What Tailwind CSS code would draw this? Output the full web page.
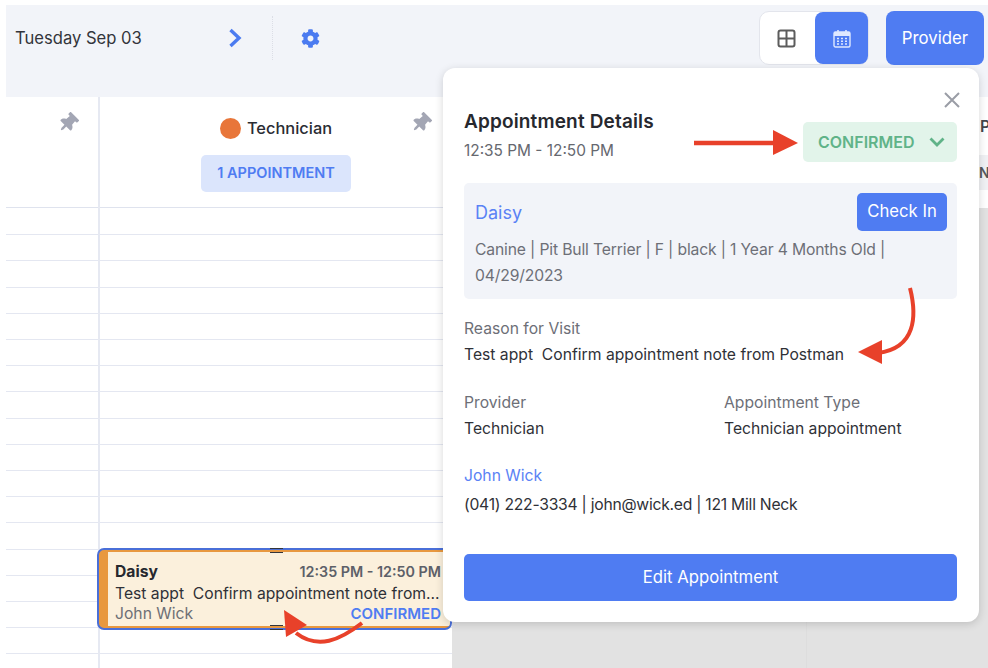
<!DOCTYPE html>
<html lang="en">
<head>
    <meta charset="UTF-8">
    <title>Appointment Details</title>
    <script src="https://cdn.jsdelivr.net/npm/@tailwindcss/browser@4"></script>
</head>
<body class="bg-white font-['Inter',sans-serif] text-[#26282e]">
<div class="relative w-[988px] h-[668px] overflow-hidden pl-[6px] pt-[5px] flex flex-col">

    <!-- Toolbar -->
    <header class="h-[92px] shrink-0 bg-[#f2f4f9] pl-[9px] pr-[4px] pt-[6px] flex items-start">
        <div class="h-[54px] w-[213px] pt-[1px] flex items-center text-[16.6px] text-[#33353b]">Tuesday Sep 03</div>
        <div class="h-[54px] flex items-center">
            <svg class="w-[14px] h-[20px]" viewBox="0 0 14 20" fill="none" stroke="#4b7bf0" stroke-width="3.4"><path d="M2.5 2l8.5 8-8.5 8"/></svg>
        </div>
        <div class="ml-[30px] mt-[5px] h-[44px] border-l border-dotted border-[#dcdee6]"></div>
        <div class="ml-[28px] h-[54px] flex items-center">
            <svg class="w-[19px] h-[19px]" viewBox="0 0 512 512" fill="#4b7bf0"><path d="M487.4 315.7l-42.6-24.6c4.3-23.2 4.3-47 0-70.2l42.6-24.6c4.9-2.8 7.1-8.6 5.5-14-11.1-35.6-30-67.8-54.7-94.6-3.8-4.1-10-5.1-14.8-2.3L380.8 110c-17.9-15.4-38.5-27.3-60.8-35.1V25.8c0-5.6-3.9-10.5-9.4-11.7-36.7-8.2-74.3-7.8-109.2 0-5.5 1.2-9.4 6.1-9.4 11.7V75c-22.2 7.9-42.8 19.8-60.8 35.1L88.7 85.5c-4.9-2.8-11-1.9-14.8 2.3-24.7 26.7-43.6 58.9-54.7 94.6-1.7 5.4.6 11.2 5.5 14L67.3 221c-4.3 23.2-4.3 47 0 70.2l-42.6 24.6c-4.9 2.8-7.1 8.6-5.5 14 11.1 35.6 30 67.8 54.7 94.6 3.8 4.1 10 5.1 14.8 2.3l42.6-24.6c17.9 15.4 38.5 27.3 60.8 35.1v49.2c0 5.6 3.9 10.5 9.4 11.7 36.7 8.2 74.3 7.8 109.2 0 5.5-1.2 9.4-6.1 9.4-11.7v-49.2c22.2-7.9 42.8-19.8 60.8-35.1l42.6 24.6c4.9 2.8 11 1.9 14.8-2.3 24.7-26.7 43.6-58.9 54.7-94.6 1.5-5.5-.7-11.3-5.6-14.1zM256 336c-44.1 0-80-35.9-80-80s35.9-80 80-80 80 35.9 80 80-35.9 80-80 80z"/></svg>
        </div>
        <div class="ml-auto w-[110px] h-[54px] flex bg-white rounded-[10px] border border-[#e3e5ec]">
            <div class="w-[55px] pr-[2px] flex items-center justify-center">
                <svg class="w-[19px] h-[19px]" viewBox="0 0 19 19" fill="none" stroke="#5c5c5c" stroke-width="2"><rect x="1.5" y="1.5" width="16" height="16" rx="2"/><path d="M9.5 1.5v16M1.5 9.5h16"/></svg>
            </div>
            <div class="flex-1 bg-[#4f7cf2] rounded-[8px] flex items-center justify-center">
                <svg class="w-[18px] h-[19px]" viewBox="0 0 18 19" fill="none"><rect x="1" y="3" width="16" height="15" rx="1.5" stroke="#dfe8ff" stroke-width="1.4"/><path d="M1 3h16v4H1z" fill="#dfe8ff"/><path d="M5 1v3M13 1v3" stroke="#dfe8ff" stroke-width="1.6"/><path d="M4 9.5h2M8 9.5h2M12 9.5h2M4 12.3h2M8 12.3h2M12 12.3h2M4 15h2M8 15h2M12 15h2" stroke="#dfe8ff" stroke-width="1.4"/></svg>
            </div>
        </div>
        <button class="ml-[17px] w-[98px] h-[54px] pt-[1px] bg-[#4f7cf2] rounded-[8px] text-white text-[16.8px]">Provider</button>
    </header>

    <div class="flex-1 flex min-h-0">
        <!-- Calendar columns -->
        <section class="w-[446px] shrink-0 flex relative">
            <div class="w-[94px] shrink-0 border-r-2 border-[#e6e9f2] flex flex-col">
                <div class="h-[111px] shrink-0 border-b border-[#dfe3ee] flex justify-end pr-[20px] pt-[16px]">
                    <svg class="w-[20px] h-[20px] rotate-45" viewBox="0 0 384 512" fill="#a3a6b4"><path d="M298 214L286 96h42c13 0 24-11 24-24V24c0-13-11-24-24-24H56C43 0 32 11 32 24v48c0 13 11 24 24 24h42L86 214C37 237 0 277 0 328c0 13 11 24 24 24h136v104c0 1 .3 2.5 .8 3.6l24 48c3 5.9 11.4 5.9 14.3 0l24-48c.6-1.1 .8-2.3 .8-3.6V352h136c13 0 24-11 24-24 0-51-38-91-86-114z"/></svg>
                </div>
                <div class="flex-1 mt-[0.5px] bg-[repeating-linear-gradient(to_bottom,transparent_0,transparent_25.2px,#e4e7f1_25.2px,#e4e7f1_26.2px)]"></div>
            </div>
            <div class="flex-1 flex flex-col relative">
                <div class="h-[111px] shrink-0 border-b border-[#dfe3ee] relative flex flex-col items-center pt-[19px]">
                    <div class="flex items-center gap-[6px]">
                        <span class="w-[21px] h-[21px] rounded-full bg-[#e8763a]"></span>
                        <span class="text-[16.4px] font-medium text-[#2a2c33]">Technician</span>
                    </div>
                    <div class="mt-[14px] w-[150px] h-[37px] rounded-[5px] bg-[#dbe5fc] text-[#4f7cf2] text-[14.5px] font-semibold flex items-center justify-center">1 APPOINTMENT</div>
                    <svg class="absolute top-[16px] left-[311px] w-[20px] h-[20px] rotate-45" viewBox="0 0 384 512" fill="#a3a6b4"><path d="M298 214L286 96h42c13 0 24-11 24-24V24c0-13-11-24-24-24H56C43 0 32 11 32 24v48c0 13 11 24 24 24h42L86 214C37 237 0 277 0 328c0 13 11 24 24 24h136v104c0 1 .3 2.5 .8 3.6l24 48c3 5.9 11.4 5.9 14.3 0l24-48c.6-1.1 .8-2.3 .8-3.6V352h136c13 0 24-11 24-24 0-51-38-91-86-114z"/></svg>
                </div>
                <div class="flex-1 mt-[0.5px] bg-[repeating-linear-gradient(to_bottom,transparent_0,transparent_25.2px,#e4e7f1_25.2px,#e4e7f1_26.2px)]"></div>

                <!-- Event on the grid -->
                <div class="absolute left-[-3px] top-[451px] w-[355px] h-[82px] rounded-[7px] border-2 border-[#4a6fd8] bg-[#e8983f] pl-[9px] py-[2px] overflow-hidden">
                    <div class="h-full bg-[#fbf0dc] pl-[7px] pr-[9px] flex flex-col leading-[20px] text-[15.7px]">
                        <div class="flex justify-between mt-[10px]">
                            <span class="font-bold text-[#26282e]">Daisy</span>
                            <span class="font-semibold text-[#5d6068] text-[14.3px]">12:35 PM - 12:50 PM</span>
                        </div>
                        <div class="mt-[2px] text-[#2f3137] whitespace-pre">Test appt  Confirm appointment note from...</div>
                        <div class="flex justify-between">
                            <span class="text-[#6d6f75]">John Wick</span>
                            <span class="font-semibold text-[#4f7cf2] text-[15px]">CONFIRMED</span>
                        </div>
                    </div>
                </div>
                <div class="absolute left-[170px] top-[451px] w-[13px] h-[5px] border-y border-[#33353b]"></div>
                <div class="absolute left-[170px] top-[528px] w-[13px] h-[5px] border-y border-[#33353b]"></div>
            </div>
        </section>

        <!-- Dimmed neighbour column -->
        <section class="flex-1 flex flex-col">
            <div class="h-[111px] shrink-0 bg-white flex flex-col pl-[528px] overflow-hidden">
                <div class="h-[58px] pt-[21px] text-[16px] font-semibold text-[#44464c] leading-none">P</div>
            </div>
            <div class="flex-1 bg-[#e2e2e2] flex">
                <div class="w-[355px] border-r border-[#dddddd]"></div>
            </div>
        </section>
    </div>

    <div class="absolute left-[452px] top-[155px] w-[536px] h-[35px] bg-[#f0f1f4] pl-[527px] text-[14px] font-semibold text-[#55575c] leading-[35px] overflow-hidden">N</div>

    <!-- Appointment details dialog -->
    <aside class="absolute left-[443px] top-[68px] w-[536px] h-[554px] bg-white rounded-[12px] shadow-[0_2px_8px_rgba(0,0,0,0.16)] pl-[21px] pr-[22px] pt-[41px]">
        <svg class="absolute top-[23px] right-[18px] w-[18px] h-[18px]" viewBox="0 0 18 18" stroke="#9a9da6" stroke-width="2"><path d="M2 2l14 14M16 2L2 16"/></svg>
        <div class="flex justify-between items-start">
            <div>
                <h2 class="text-[19px] font-semibold leading-[26px] tracking-[0.15px] text-[#26282e]">Appointment Details</h2>
                <p class="mt-[5px] text-[15.4px] leading-[22px] text-[#66686f]">12:35 PM - 12:50 PM</p>
            </div>
            <div class="mt-[13px] w-[154px] h-[40px] rounded-[5px] bg-[#e2f4ea] flex items-center pl-[15px] pr-[12px] justify-between">
                <span class="text-[16px] font-semibold text-[#60b388]">CONFIRMED</span>
                <svg class="w-[16px] h-[10px]" viewBox="0 0 16 10" fill="none" stroke="#60b388" stroke-width="2.8"><path d="M1.5 1.5L8 8l6.5-6.5"/></svg>
            </div>
        </div>

        <div class="mt-[21px] h-[116px] bg-[#f2f4f9] rounded-[5px] pl-[11px] pr-[10px] pt-[10px]">
            <div class="flex justify-between items-center">
                <span class="text-[18px] text-[#5a82f5]">Daisy</span>
                <button class="w-[90px] h-[38px] bg-[#4f7cf2] rounded-[5px] text-white text-[16.7px]">Check In</button>
            </div>
            <p class="mt-[6px] text-[15.7px] leading-[26px] text-[#6d6f77] tracking-[-0.15px]">Canine | Pit Bull Terrier | F | black | 1 Year 4 Months Old |<br>04/29/2023</p>
        </div>

        <div class="mt-[17px] text-[15.7px] leading-[26px]">
            <p class="text-[#6d6f77]">Reason for Visit</p>
            <p class="text-[#2f3137] whitespace-pre">Test appt  Confirm appointment note from Postman</p>
        </div>

        <div class="mt-[22px] grid grid-cols-[260px_1fr] text-[15.7px] leading-[26px]">
            <div>
                <p class="text-[#6d6f77]">Provider</p>
                <p class="text-[#2f3137]">Technician</p>
            </div>
            <div>
                <p class="text-[#6d6f77]">Appointment Type</p>
                <p class="text-[#2f3137]">Technician appointment</p>
            </div>
        </div>

        <div class="mt-[21px] text-[15.7px] leading-[26px]">
            <p class="text-[#5a82f5]">John Wick</p>
            <p class="mt-[3px] text-[#2f3137] tracking-[-0.25px]">(041) 222-3334 | john@wick.ed | 121 Mill Neck</p>
        </div>

        <button class="absolute left-[21px] top-[486px] w-[493px] h-[47px] bg-[#4f7cf2] rounded-[5px] text-white text-[16.7px]">Edit Appointment</button>
    </aside>

    <!-- Annotation arrows drawn over the screenshot -->
    <svg class="absolute left-0 top-0 w-[988px] h-[668px] pointer-events-none" viewBox="0 0 988 668" fill="none">
        <path d="M694 143H776" stroke="#e8412a" stroke-width="4.5"/>
        <path d="M798 143L773 130V155Z" fill="#e8412a"/>
        <path d="M910 288C917 316 916 348 878 353" stroke="#e8412a" stroke-width="4"/>
        <path d="M858 352L882 340V364Z" fill="#e8412a"/>
        <path d="M362 623C340 640 318 650 296 633" stroke="#e8412a" stroke-width="4"/>
        <path d="M284 610L307 625L286 637Z" fill="#e8412a"/>
    </svg>
</div>
</body>
</html>
